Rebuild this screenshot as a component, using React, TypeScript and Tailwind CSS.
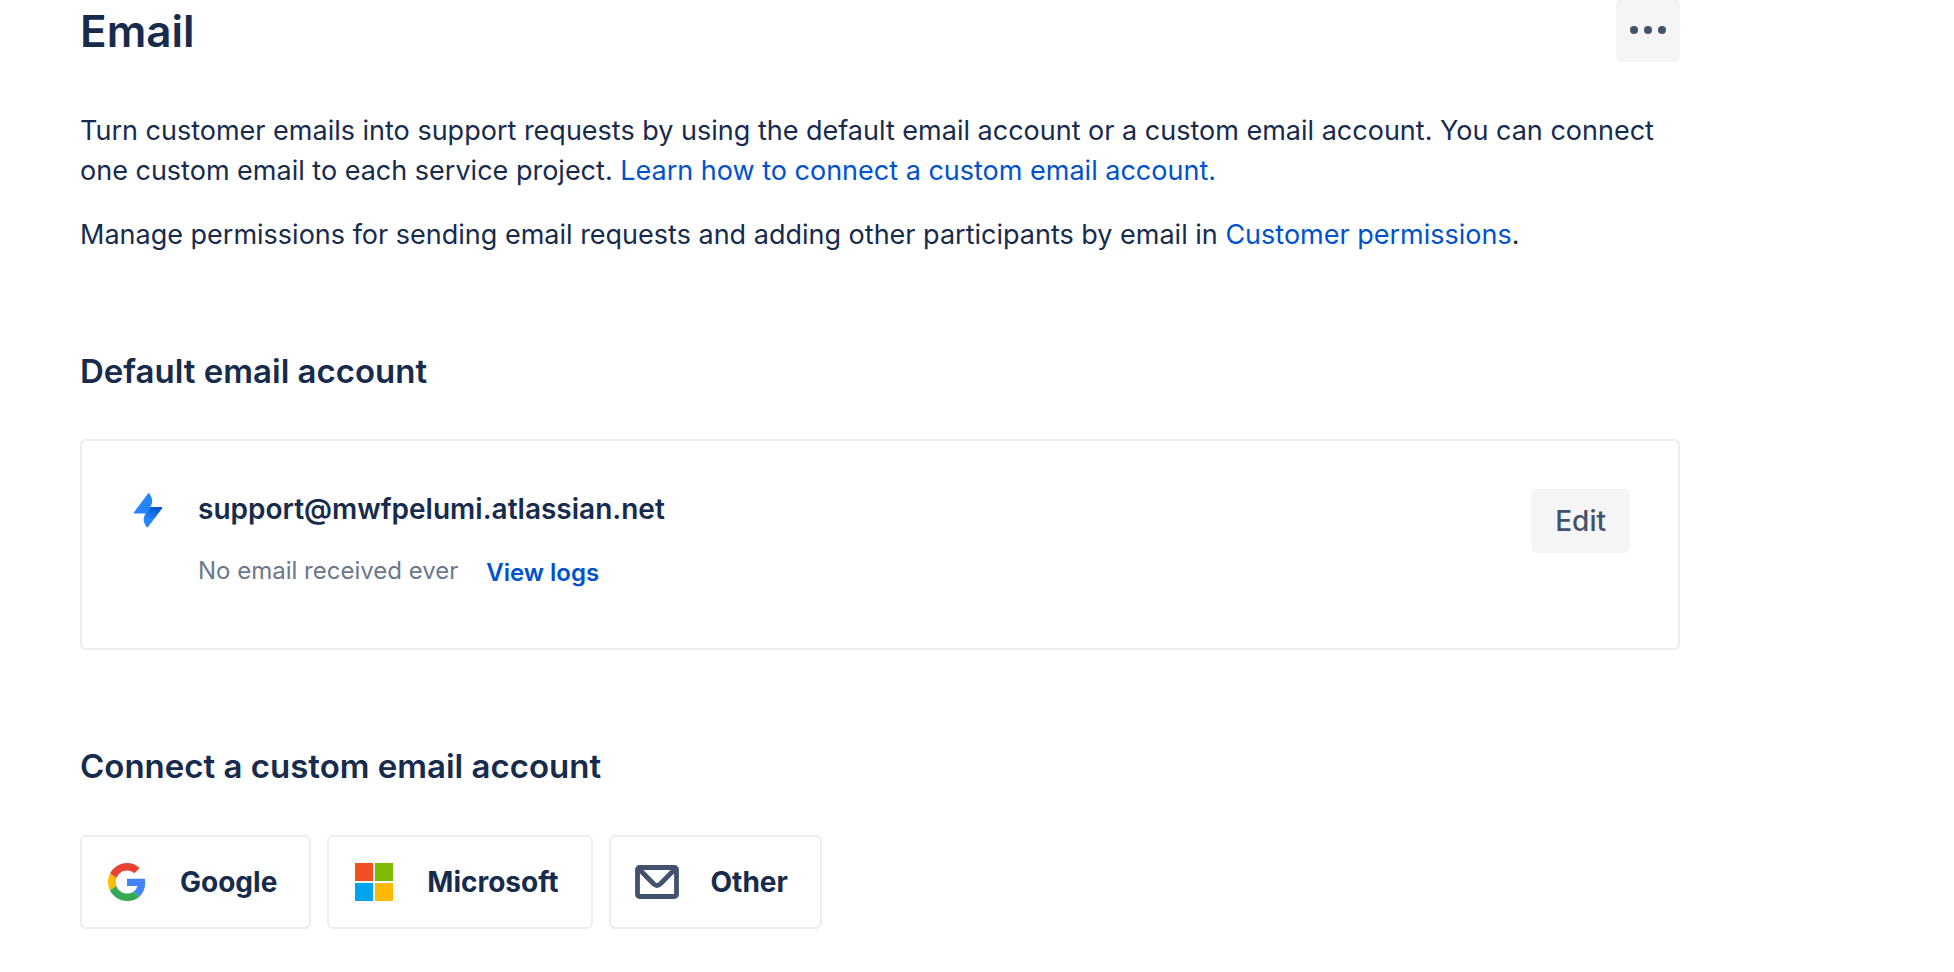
import React from "react";

const card = "rounded-md border-2 border-[#ebecf0] bg-white";
const link = "text-[#0052cc] hover:underline";

const providers = [
  { name: "Google", icon: <GoogleIcon /> },
  { name: "Microsoft", icon: <MicrosoftIcon /> },
  { name: "Other", icon: <MailIcon /> },
];

function GoogleIcon() {
  return (
    <svg className="h-10 w-[42px]" viewBox="-2 -1 42 40" aria-hidden="true">
      <g transform="scale(0.7917)">
        <path fill="#EA4335" d="M24 9.500c3.540 0 6.710 1.220 9.210 3.600l6.850-6.850C35.900 2.380 30.470 0 24 0 14.620 0 6.510 5.380 2.560 13.220l7.980 6.190C12.430 13.720 17.740 9.500 24 9.500z" />
        <path fill="#4285F4" d="M46.980 24.550c0-1.570-.15-3.090-.38-4.550H24v9.020h12.940c-.58 2.960-2.260 5.480-4.780 7.180l7.730 6c4.510-4.180 7.090-10.360 7.090-17.650z" />
        <path fill="#FBBC05" d="M10.530 28.590c-.48-1.450-.76-2.990-.76-4.590s.27-3.140.76-4.590l-7.980-6.190C.92 16.460 0 20.120 0 24c0 3.880.92 7.540 2.560 10.780l7.970-6.190z" />
        <path fill="#34A853" d="M24 48c6.480 0 11.930-2.130 15.890-5.810l-7.730-6c-2.150 1.450-4.920 2.300-8.160 2.300-6.260 0-11.570-4.220-13.470-9.910l-7.980 6.190C6.510 42.620 14.620 48 24 48z" />
      </g>
    </svg>
  );
}

function MicrosoftIcon() {
  return (
    <svg className="h-10 w-[42px]" viewBox="-2 -1 42 40" aria-hidden="true">
      <path fill="#F25022" d="M0 0h18v18H0z" />
      <path fill="#7FBA00" d="M20 0h18v18H20z" />
      <path fill="#00A4EF" d="M0 20h18v18H0z" />
      <path fill="#FFB900" d="M20 20h18v18H20z" />
    </svg>
  );
}

function MailIcon() {
  return (
    <svg
      className="h-10 w-11"
      viewBox="0 0 44 40"
      fill="none"
      stroke="#42526E"
      strokeWidth="4.800"
      strokeLinejoin="round"
      aria-hidden="true"
    >
      <rect x="2.500" y="5.500" width="39" height="29" rx="2" />
      <path d="M3.500 6.500L18.500 21.800Q22 25 25.500 21.800L40.500 6.500" />
    </svg>
  );
}

function BoltIcon() {
  return (
    <svg className="h-10 w-9" viewBox="0 0 36 40" aria-hidden="true">
      <defs>
        <linearGradient id="bolt-shade" x1="26" y1="17" x2="19" y2="30" gradientUnits="userSpaceOnUse">
          <stop offset="0" stopColor="#0052CC" />
          <stop offset="1" stopColor="#2684FF" />
        </linearGradient>
      </defs>
      <path fill="#2684FF" d="M18.700 3.700C22.600 8.500 23.200 13.200 20.600 17.500L16.200 24.500H5C4.100 24.500 3.700 23.600 4.200 22.900Z" />
      <path fill="url(#bolt-shade)" d="M20.300 18H31.200C32.100 18 32.500 18.900 32 19.600L17.400 38.800C13.200 34 12.600 29.500 15.200 25.200Z" />
    </svg>
  );
}

export default function App() {
  return (
    <main className="px-20 font-['Inter',sans-serif] text-[#172b4d]">
      <div className="max-w-[1600px]">
        <header className="flex items-start justify-between">
          <h1 className="text-[44px] leading-[62px] font-semibold">Email</h1>
          <button
            type="button"
            aria-label="More actions"
            className="-mt-0.5 flex h-16 w-16 items-center justify-center rounded-md bg-[#f5f5f5]"
          >
            <svg className="h-3 w-10" viewBox="0 0 40 12" fill="#42526E" aria-hidden="true">
              <circle cx="6" cy="6" r="4" />
              <circle cx="20" cy="6" r="4" />
              <circle cx="34" cy="6" r="4" />
            </svg>
          </button>
        </header>
        <div className="mt-[49px] space-y-6 text-[27px] leading-10">
          <p>
            Turn customer emails into support requests by using the default email account or a custom email
            account. You can connect one custom email to each service project.{" "}
            <a href="#" className={link}>Learn how to connect a custom email account.</a>
          </p>
          <p>
            Manage permissions for sending email requests and adding other participants by email in{" "}
            <a href="#" className={link}>Customer permissions</a>.
          </p>
        </div>
        <h2 className="mt-24 text-[33px] leading-10 font-semibold">Default email account</h2>
        <section className={`${card} mt-12 flex h-[211px] items-start gap-8 p-12`}>
          <BoltIcon />
          <div className="flex-1">
            <h3 className="text-[28px] leading-10 font-semibold">support@mwfpelumi.atlassian.net</h3>
            <div className="mt-[26px] flex gap-7 text-2xl">
              <p className="text-[#6b778c]">No email received ever</p>
              <a href="#" className={`${link} pt-0.5 font-semibold`}>View logs</a>
            </div>
          </div>
          <button type="button" className="h-16 rounded-md bg-[#f5f5f5] px-6 text-[28px] font-medium text-[#42526e]">
            Edit
          </button>
        </section>
        <h2 className="mt-24 text-[33px] leading-10 font-semibold">Connect a custom email account</h2>
        <div className="mt-[49px] flex flex-wrap gap-4">
          {providers.map((p) => (
            <button
              key={p.name}
              type="button"
              className={`${card} flex h-[94px] items-center gap-8 pr-8 pl-6 text-[28px] font-bold`}
            >
              {p.icon}
              {p.name}
            </button>
          ))}
        </div>
      </div>
    </main>
  );
}
